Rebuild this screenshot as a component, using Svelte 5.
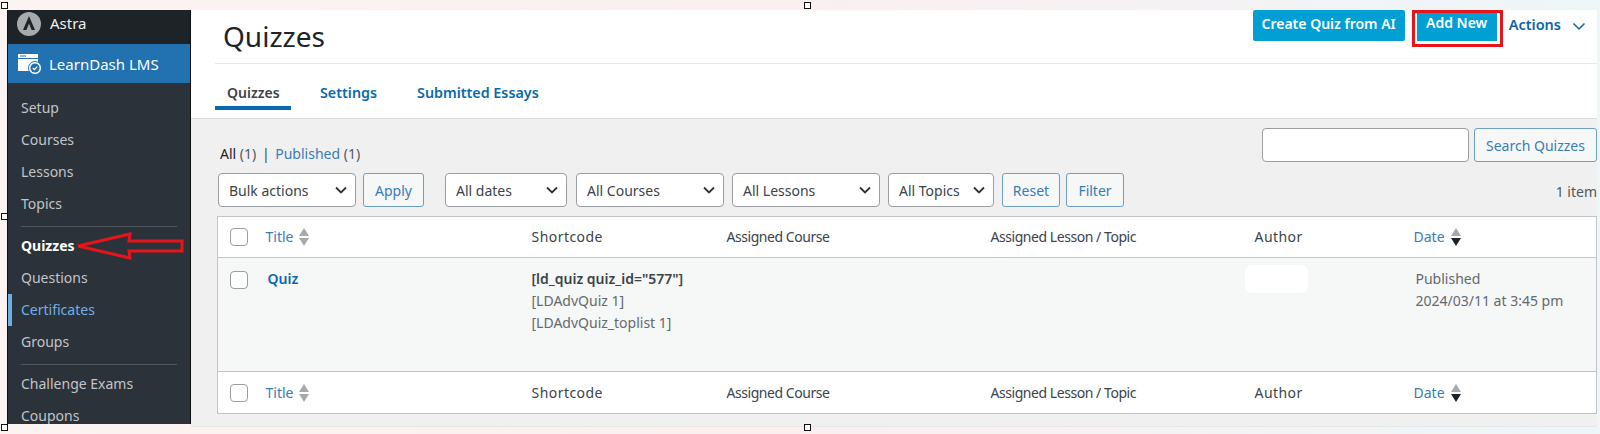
<script>
  const groups = [
    [
      { label: 'Setup' },
      { label: 'Courses' },
      { label: 'Lessons' },
      { label: 'Topics' }
    ],
    [
      { label: 'Quizzes', active: true },
      { label: 'Questions' },
      { label: 'Certificates', hover: true },
      { label: 'Groups' }
    ],
    [
      { label: 'Challenge Exams' },
      { label: 'Coupons' }
    ]
  ];

  const filters = [
    { label: 'All dates', width: 122 },
    { label: 'All Courses', width: 148 },
    { label: 'All Lessons', width: 148 },
    { label: 'All Topics', width: 106 }
  ];

  const columns = [
    { label: 'Shortcode', cls: 'wide' },
    { label: 'Assigned Course', cls: 'tight' },
    { label: 'Assigned Lesson / Topic', cls: 'tight' },
    { label: 'Author', cls: 'wide' }
  ];
</script>

{#snippet chevron()}
  <svg class="chevron" width="14" height="14" viewBox="0 0 14 14">
    <path d="M2 4.5 L7 9.5 L12 4.5" fill="none" stroke="#2c3338" stroke-width="1.8" />
  </svg>
{/snippet}

{#snippet sorter(dark)}
  <svg class="sorter" width="10" height="18" viewBox="0 0 10 18">
    <path d="M5 0 L10 8 L0 8 Z" fill="#a7aaad" />
    <path d="M0 10 L10 10 L5 18 Z" fill={dark ? '#1d2327' : '#a7aaad'} />
  </svg>
{/snippet}

{#snippet headRow(cls)}
  <tr class={cls}>
    <td class="check"><span class="box"></span></td>
    <td><span class="sort">Title {@render sorter(false)}</span></td>
    {#each columns as col}
      <td class={col.cls}>{col.label}</td>
    {/each}
    <td><span class="sort">Date {@render sorter(true)}</span></td>
  </tr>
{/snippet}

<div class="frame">
  <aside class="sidebar">
    <div class="site">
      <svg width="24" height="24" viewBox="0 0 24 24">
        <circle cx="12" cy="12" r="12" fill="#a7aaad" />
        <path d="M12 4 L18 18 L14.6 18 L12 11.5 L9.4 18 L6 18 Z" fill="#1d2327" />
      </svg>
      <span>Astra</span>
    </div>
    <div class="plugin">
      <svg width="24" height="22" viewBox="0 0 24 22">
        <path d="M1 1 H21 V18 H1 Z" fill="#fff" />
        <path d="M1 5 H21 V6 H1 Z" fill="#2271b1" />
        <path d="M3 2.5 H9 V3.5 H3 Z" fill="#2271b1" />
        <circle cx="18" cy="15" r="6.5" fill="#fff" stroke="#2271b1" stroke-width="1" />
        <circle cx="18" cy="15" r="4.6" fill="#2271b1" />
        <path d="M15.8 15 L17.4 16.6 L20.2 13.6" fill="none" stroke="#fff" stroke-width="1.2" />
      </svg>
      <span>LearnDash LMS</span>
    </div>
    <nav class="menu">
      {#each groups as group, i}
        {#if i > 0}<div class="sep"></div>{/if}
        {#each group as item}
          <div class="item" class:active={item.active} class:hover={item.hover}>{item.label}</div>
        {/each}
      {/each}
    </nav>
  </aside>

  <main class="main">
    <header class="head">
      <div class="title-row">
        <h1>Quizzes</h1>
        <div class="actions">
          <span class="btn-ai">Create Quiz from AI</span>
          <span class="outline"><span class="btn-add">Add New</span></span>
          <span class="more">Actions</span>
          <svg class="more-icon" width="14" height="14" viewBox="0 0 14 14">
            <path d="M1.5 4.5 L7 10 L12.5 4.5" fill="none" stroke="#0a66a8" stroke-width="1.5" />
          </svg>
        </div>
      </div>
      <div class="tabs">
        <span class="tab current">Quizzes</span>
        <span class="tab">Settings</span>
        <span class="tab">Submitted Essays</span>
      </div>
    </header>

    <section class="content">
      <div class="status-row">
        <div class="status">
          <b>All</b> <i>(1)</i> <em>|</em> <a>Published</a> <i>(1)</i>
        </div>
        <div class="search">
          <span class="input"></span>
          <span class="btn search-btn">Search Quizzes</span>
        </div>
      </div>

      <div class="nav-row">
        <span class="select bulk">Bulk actions {@render chevron()}</span>
        <span class="btn apply">Apply</span>
        <div class="filters">
          {#each filters as f}
            <span class="select" style="width: {f.width}px">{f.label} {@render chevron()}</span>
          {/each}
          <span class="btn reset">Reset</span>
          <span class="btn filter">Filter</span>
        </div>
        <span class="count">1 item</span>
      </div>

      <table>
        <colgroup>
          <col style="width: 38px" />
          <col style="width: 266px" />
          <col style="width: 195px" />
          <col style="width: 264px" />
          <col style="width: 264px" />
          <col style="width: 159px" />
          <col />
        </colgroup>
        <thead>{@render headRow('thead')}</thead>
        <tbody>
          <tr class="row">
            <td class="check"><span class="box"></span></td>
            <td><span class="quiz">Quiz</span></td>
            <td class="codes">
              <strong>[ld_quiz quiz_id="577"]</strong>
              <span>[LDAdvQuiz 1]</span>
              <span>[LDAdvQuiz_toplist 1]</span>
            </td>
            <td></td>
            <td></td>
            <td><span class="redacted"></span></td>
            <td class="when">Published<br />2024/03/11 at 3:45 pm</td>
          </tr>
        </tbody>
        <tfoot>{@render headRow('tfoot')}</tfoot>
      </table>
    </section>
  </main>

  <!-- selection handles and the arrow sit on top of the screenshot -->
  <span class="handle" style="left: 1px; top: 2px"></span>
  <span class="handle" style="left: 804px; top: 2px"></span>
  <span class="handle" style="left: 1px; top: 213px"></span>
  <span class="handle" style="left: 1px; top: 424px"></span>
  <span class="handle" style="left: 804px; top: 424px"></span>
  <svg class="arrow" width="110" height="30" viewBox="0 0 110 30">
    <path d="M2 15 L54 3 L53 10 L106 10 L106 20 L53 20 L54 27 Z" fill="none" stroke="#e8141c" stroke-width="3" />
  </svg>
</div>

<style>
  :global(body) {
    margin: 0;
    background: linear-gradient(90deg, #fbf4f2 0%, #fbeff0 50%, #eef6f8 100%);
  }

  .frame {
    position: relative;
    height: 434px;
    box-sizing: border-box;
    padding: 10px 3px 8px 7px;
    display: flex;
    overflow: hidden;
    font-family: "Noto Sans", sans-serif;
    font-size: 14px;
    color: #3c434a;
  }

  .sidebar {
    width: 182px;
    height: 414px;
    flex: none;
    background: #2b3239;
    border-left: 1px solid #111;
    border-right: 1px solid #111;
    overflow: hidden;
  }

  .site {
    height: 34px;
    box-sizing: border-box;
    background: #1d2327;
    display: flex;
    align-items: flex-start;
    gap: 9px;
    padding: 2px 0 0 9px;
    color: #f0f0f1;
    font-size: 15px;
    line-height: 22px;
  }

  .plugin {
    height: 39px;
    background: #2271b1;
    display: flex;
    align-items: center;
    gap: 8px;
    padding-left: 9px;
    color: #fff;
    font-size: 15px;
  }

  .menu {
    padding-top: 9px;
  }

  .item {
    height: 32px;
    line-height: 32px;
    padding-left: 13px;
    color: #c3c4c7;
  }

  .item.active {
    color: #fff;
    font-weight: 700;
  }

  .item.hover {
    color: #72aee6;
    border-left: 4px solid #72aee6;
    padding-left: 9px;
  }

  .sep {
    height: 1px;
    margin: 6px 13px 3px;
    background: #50565c;
  }

  .main {
    flex: 1;
    min-width: 0;
    height: 416px;
    background: #f0f0f1;
    border-bottom: 1px solid #e6e6e6;
  }

  .head {
    height: 109px;
    box-sizing: border-box;
    background: #fff;
    padding-left: 24px;
    border-bottom: 1px solid #dcdcde;
  }

  .title-row {
    height: 54px;
    box-sizing: border-box;
    display: flex;
    justify-content: space-between;
    border-bottom: 1px solid #e8e8e8;
  }

  h1 {
    margin: 0;
    padding-left: 8px;
    font-size: 28px;
    font-weight: 400;
    line-height: 52px;
    color: #1d2327;
  }

  .actions {
    display: flex;
    align-items: flex-start;
    font-weight: 600;
    color: #fff;
  }

  .btn-ai {
    width: 152px;
    height: 31px;
    line-height: 27px;
    text-align: center;
    background: #019fd4;
    border-radius: 2px;
  }

  .outline {
    margin-left: 7px;
    padding: 0 3px 3px 2px;
    border: 3px solid #e8141c;
    background: #fff;
  }

  .btn-add {
    display: block;
    width: 80px;
    height: 28px;
    line-height: 20px;
    text-align: center;
    background: #019fd4;
  }

  .more {
    margin: 4px 0 0 6px;
    color: #0a66a8;
    font-size: 14.5px;
  }

  .more-icon {
    margin: 9px 11px 0 11px;
  }

  .tabs {
    display: flex;
    height: 54px;
    align-items: flex-start;
  }

  .tab {
    padding: 19px 21px 0 19px;
    font-weight: 600;
    font-size: 14.3px;
    color: #0a6ab0;
  }

  .tab.current {
    height: 46px;
    box-sizing: border-box;
    padding: 19px 0 0 12px;
    margin-right: 10px;
    width: 76px;
    font-size: 14px;
    color: #3c434a;
    border-bottom: 4px solid #0a6ab0;
  }

  .content {
    padding: 9px 0 0 27px;
  }

  .status-row {
    display: flex;
    justify-content: space-between;
    height: 45px;
  }

  .status {
    padding: 16px 0 0 2px;
    color: #1d2327;
  }

  .status b {
    font-weight: 400;
  }

  .status i {
    font-style: normal;
    color: #50575e;
  }

  .status em {
    font-style: normal;
    margin: 0 2px;
    color: #3c434a;
  }

  .status a {
    color: #3a7cb5;
  }

  .search {
    display: flex;
    gap: 5px;
    height: 34px;
  }

  .input {
    width: 205px;
    margin-left: -1px;
    background: #fff;
    border: 1px solid #9a9da1;
    border-radius: 4px;
  }

  .btn {
    display: flex;
    align-items: center;
    justify-content: center;
    box-sizing: border-box;
    height: 34px;
    background: #f6f7f7;
    border: 1px solid #6e9dc6;
    border-radius: 3px;
    color: #3a7cb5;
    font-size: 14px;
  }

  .search-btn {
    width: 123px;
  }

  .nav-row {
    display: flex;
    align-items: center;
    height: 34px;
  }

  .select {
    display: flex;
    align-items: center;
    justify-content: space-between;
    box-sizing: border-box;
    height: 34px;
    padding: 0 7px 0 10px;
    background: #fff;
    border: 1px solid #9a9da1;
    border-radius: 4px;
    color: #3c434a;
  }

  .bulk {
    width: 138px;
  }

  .apply {
    width: 61px;
    margin-left: 7px;
  }

  .filters {
    display: flex;
    gap: 8px;
    margin-left: 21px;
  }

  .filters .select:nth-child(2) {
    margin-left: 1px;
  }

  .reset {
    width: 58px;
  }

  .filter {
    width: 58px;
    margin-left: -2px;
  }

  .count {
    margin-left: auto;
    color: #50575e;
    padding-top: 2px;
  }

  table {
    margin-top: 9px;
    margin-left: -1px;
    width: 1380px;
    table-layout: fixed;
    border-collapse: collapse;
    background: #fff;
    border: 1px solid #c3c4c7;
  }

  td {
    padding: 0 10px;
    vertical-align: middle;
  }

  .thead td {
    height: 39px;
    padding-bottom: 1px;
  }

  .tfoot td {
    height: 41px;
  }

  .thead {
    border-bottom: 1px solid #c3c4c7;
  }

  .tfoot {
    border-top: 1px solid #c3c4c7;
  }

  .wide {
    letter-spacing: 0.45px;
  }

  .tight {
    letter-spacing: -0.45px;
  }

  .row {
    height: 114px;
    background: #f6f7f7;
  }

  .row td {
    vertical-align: top;
    padding-top: 10px;
  }

  .check {
    padding: 0 0 0 12px;
  }

  .row .check {
    padding: 13px 0 0 12px;
  }

  .box {
    display: block;
    width: 16px;
    height: 16px;
    background: #fff;
    border: 1px solid #9a9da1;
    border-radius: 4px;
  }

  .sort {
    display: inline-flex;
    align-items: center;
    gap: 6px;
    color: #3a7cb5;
  }

  .quiz {
    display: block;
    padding: 1px 0 0 2px;
    font-weight: 600;
    color: #0a66a8;
  }

  .codes {
    line-height: 22px;
    color: #646970;
  }

  .codes strong {
    display: block;
    color: #3c434a;
    font-weight: 600;
  }

  .codes span {
    display: block;
  }

  .redacted {
    display: block;
    width: 63px;
    height: 28px;
    margin: -3px 0 0 -10px;
    background: #fff;
    border-radius: 7px;
  }

  .when {
    padding-left: 12px;
    line-height: 22px;
    color: #646970;
  }

  .handle {
    position: absolute;
    width: 5px;
    height: 5px;
    background: #fff;
    border: 1px solid #111;
  }

  .arrow {
    position: absolute;
    left: 76px;
    top: 231px;
  }
</style>
